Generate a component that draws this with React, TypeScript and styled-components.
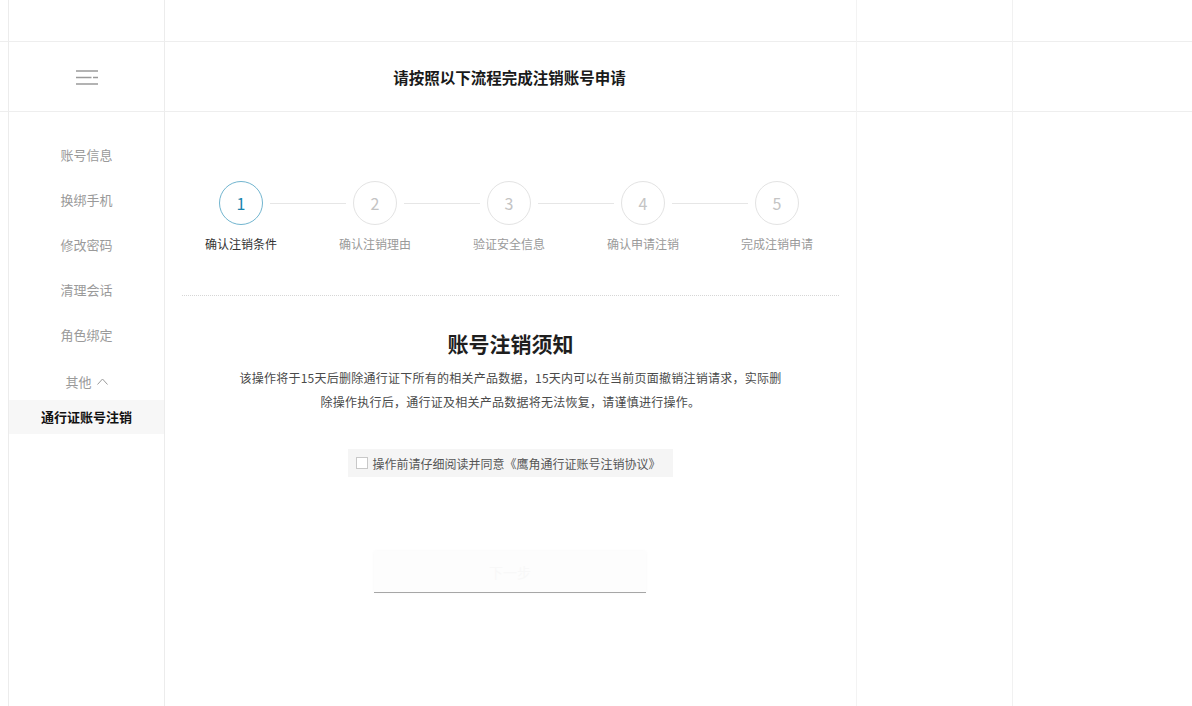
import styled, { createGlobalStyle } from "styled-components";

const GlobalStyle = createGlobalStyle`
  html, body {
    margin: 0;
    padding: 0;
    background: #fff;
  }
  body {
    font-family: "Noto Sans CJK SC", "Noto Sans", sans-serif;
    color: #333;
  }
  * { box-sizing: border-box; }
`;

const Page = styled.div`
  display: grid;
  grid-template-columns: 9px 156px 692px 156px 1fr;
  grid-template-rows: 42px 70px 594px;
  width: 1192px;
  height: 706px;
  overflow: hidden;
`;

const Cell = styled.div<{ $right?: string; $bottom?: boolean }>`
  min-width: 0;
  border-right: ${({ $right }) => ($right ? `1px solid ${$right}` : "none")};
  border-bottom: ${({ $bottom }) => ($bottom ? "1px solid #eeeeee" : "none")};
`;

const HeaderCell = styled(Cell)`
  display: flex;
  align-items: center;
  justify-content: center;
`;

const PageTitle = styled.h1`
  margin: 0 0 0 -2px;
  font-size: 15.5px;
  font-weight: 700;
  color: #1a1a1a;
`;

const MenuButton = styled.button`
  border: none;
  background: none;
  padding: 0;
  margin: 1px 0 0 1px;
  display: flex;
  cursor: pointer;
`;

const NavList = styled.nav`
  display: flex;
  flex-direction: column;
  padding-top: 20px;
`;

const NavItem = styled.a<{ $active?: boolean }>`
  display: block;
  height: ${({ $active }) => ($active ? "34px" : "45px")};
  line-height: ${({ $active }) => ($active ? "34px" : "45px")};
  text-align: center;
  font-size: 13px;
  font-weight: ${({ $active }) => ($active ? 700 : 400)};
  color: ${({ $active }) => ($active ? "#111" : "#9a9a9a")};
  background: ${({ $active }) => ($active ? "#f7f7f7" : "transparent")};
  text-decoration: none;
  cursor: pointer;
`;

const GroupTitle = styled.div`
  height: 43px;
  padding-top: 6px;
  display: flex;
  align-items: center;
  justify-content: center;
  gap: 5px;
  font-size: 13px;
  color: #9a9a9a;
`;

const Body = styled(Cell)`
  padding: 69px 17px 0 17px;
  display: flex;
  flex-direction: column;
  align-items: stretch;
`;

const Steps = styled.ol`
  list-style: none;
  margin: 0;
  padding: 0 3px 0 0;
  display: flex;
  justify-content: center;
`;

const Step = styled.li`
  flex: 0 0 134px;
  display: flex;
  flex-direction: column;
  align-items: center;
`;

const StepTrack = styled.div`
  width: 100%;
  display: flex;
  align-items: center;
`;

const Connector = styled.span<{ $hidden?: boolean }>`
  flex: 1;
  height: 1px;
  background: ${({ $hidden }) => ($hidden ? "transparent" : "#e6e6e6")};
`;

const Circle = styled.div<{ $active?: boolean }>`
  flex: 0 0 44px;
  height: 44px;
  margin: 0 7px;
  border-radius: 50%;
  border: 1px solid ${({ $active }) => ($active ? "#72b5cf" : "#e3e3e3")};
  display: flex;
  align-items: center;
  justify-content: center;
  font-size: 16px;
  color: ${({ $active }) => ($active ? "#1a84ad" : "#c4c4c4")};
`;

const StepLabel = styled.span<{ $active?: boolean }>`
  margin-top: 11px;
  font-size: 12px;
  line-height: 16px;
  white-space: nowrap;
  color: ${({ $active }) => ($active ? "#333" : "#9a9a9a")};
`;

const Divider = styled.hr`
  margin: 43px 0 0;
  border: none;
  border-top: 1px dotted #d6d6d6;
  height: 0;
`;

const NoticeTitle = styled.h2`
  margin: 33px 0 0;
  font-size: 21px;
  line-height: 28px;
  font-weight: 700;
  color: #1e1e1e;
  text-align: center;
`;

const NoticeText = styled.p`
  margin: 9px 0 0;
  font-size: 12px;
  line-height: 24px;
  letter-spacing: 0.25px;
  color: #4a4a4a;
  text-align: center;
`;

const AgreeRow = styled.label`
  align-self: center;
  margin-top: 35px;
  height: 28px;
  padding: 0 12px 0 8px;
  display: flex;
  align-items: center;
  gap: 4px;
  background: #f5f5f5;
  font-size: 12px;
  color: #555;
  cursor: pointer;
`;

const CheckBox = styled.span`
  width: 12px;
  height: 12px;
  border: 1px solid #c8c8c8;
  background: #fff;
`;

const NextButton = styled.button`
  align-self: center;
  margin-top: 74px;
  margin-left: -1px;
  width: 272px;
  height: 42px;
  border: none;
  border-bottom: 1px solid #a6a6a6;
  background: #fdfdfd;
  box-shadow: 0 0 3px rgba(0, 0, 0, 0.03);
  font-family: inherit;
  font-size: 14px;
  color: #f8f8f8;
  cursor: not-allowed;
`;

const steps = ["确认注销条件", "确认注销理由", "验证安全信息", "确认申请注销", "完成注销申请"];
const navItems = ["账号信息", "换绑手机", "修改密码", "清理会话", "角色绑定"];

function MenuIcon() {
  return (
    <svg width="22" height="15" viewBox="0 0 22 15" fill="none" stroke="#9a9a9a" strokeWidth="1.5">
      <line x1="0" y1="1" x2="22" y2="1" />
      <line x1="0" y1="7.5" x2="15.5" y2="7.5" />
      <line x1="17" y1="7.5" x2="22" y2="7.5" />
      <line x1="0" y1="14" x2="22" y2="14" />
    </svg>
  );
}

function CaretUp() {
  return (
    <svg width="11" height="7" viewBox="0 0 11 7" fill="none" stroke="#9a9a9a" strokeWidth="1">
      <polyline points="0.5,6.5 5.5,1 10.5,6.5" />
    </svg>
  );
}

export default function App() {
  return (
    <>
      <GlobalStyle />
      <Page>
        {/* top blank row */}
        <Cell $right="#ececec" $bottom />
        <Cell $right="#ececec" $bottom />
        <Cell $right="#f3f3f3" $bottom />
        <Cell $right="#f1f1f1" $bottom />
        <Cell $bottom />

        {/* header row */}
        <Cell $right="#ececec" $bottom />
        <HeaderCell $right="#ececec" $bottom>
          <MenuButton aria-label="menu">
            <MenuIcon />
          </MenuButton>
        </HeaderCell>
        <HeaderCell $right="#f3f3f3" $bottom>
          <PageTitle>请按照以下流程完成注销账号申请</PageTitle>
        </HeaderCell>
        <Cell $right="#f1f1f1" $bottom />
        <Cell $bottom />

        {/* content row */}
        <Cell $right="#ececec" />
        <Cell $right="#ececec">
          <NavList>
            {navItems.map((item) => (
              <NavItem key={item}>{item}</NavItem>
            ))}
            <GroupTitle>
              其他
              <CaretUp />
            </GroupTitle>
            <NavItem $active>通行证账号注销</NavItem>
          </NavList>
        </Cell>
        <Body $right="#f3f3f3">
          <Steps>
            {steps.map((label, i) => (
              <Step key={label}>
                <StepTrack>
                  <Connector $hidden={i === 0} />
                  <Circle $active={i === 0}>{i + 1}</Circle>
                  <Connector $hidden={i === steps.length - 1} />
                </StepTrack>
                <StepLabel $active={i === 0}>{label}</StepLabel>
              </Step>
            ))}
          </Steps>
          <Divider />
          <NoticeTitle>账号注销须知</NoticeTitle>
          <NoticeText>
            该操作将于15天后删除通行证下所有的相关产品数据，15天内可以在当前页面撤销注销请求，实际删
            <br />
            除操作执行后，通行证及相关产品数据将无法恢复，请谨慎进行操作。
          </NoticeText>
          <AgreeRow>
            <CheckBox />
            操作前请仔细阅读并同意《鹰角通行证账号注销协议》
          </AgreeRow>
          <NextButton disabled>下一步</NextButton>
        </Body>
        <Cell $right="#f1f1f1" />
        <Cell />
      </Page>
    </>
  );
}
